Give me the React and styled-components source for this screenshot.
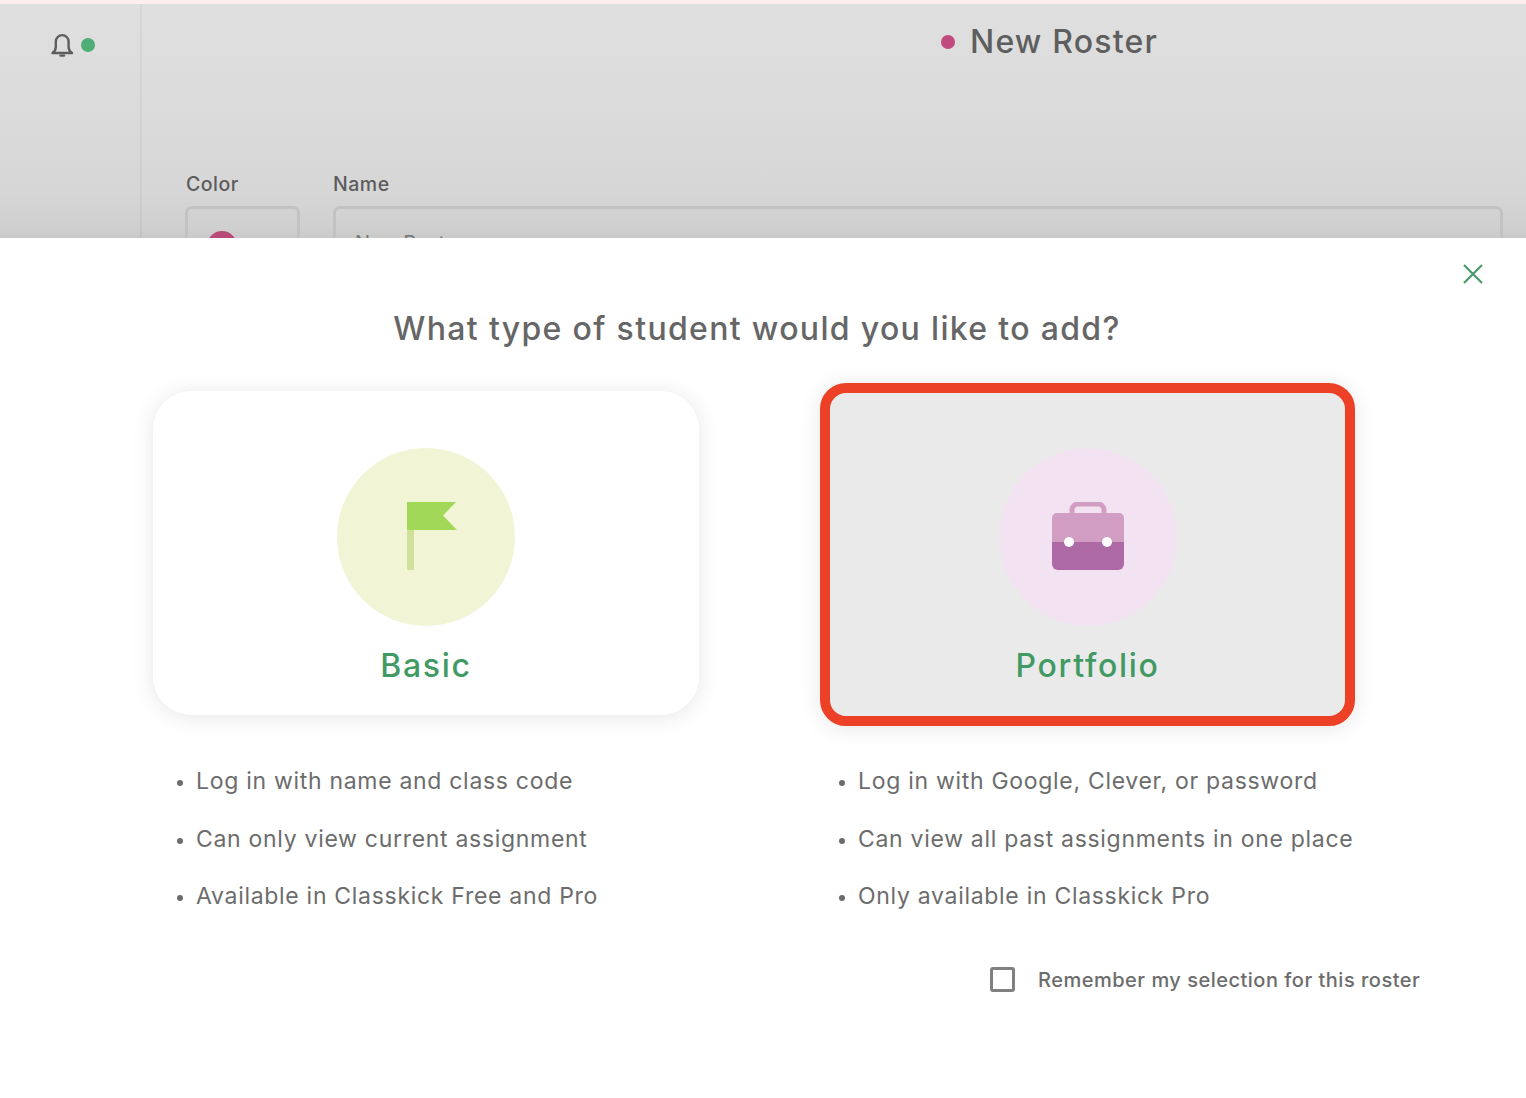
import React from 'react'
import styled, { createGlobalStyle } from 'styled-components'

const GlobalStyle = createGlobalStyle`
  html, body { margin: 0; padding: 0; background: #fff; }
  body { font-family: Inter, "Open Sans", sans-serif; color: #666; }
  * { box-sizing: border-box; }
`

const Page = styled.div`
  position: relative;
  width: 100%;
  height: 1098px;
  overflow: hidden;
`

const Backdrop = styled.div`
  display: flex;
  height: 238px;
  overflow: hidden;
  border-top: 4px solid #ffeeee;
  background: linear-gradient(#dfdfdf 0, #dcdcdc 90px, #d6d6d6 190px, #cfcfcf 225px, #c6c6c6 238px);
`

const Sidebar = styled.div`
  flex: 0 0 142px;
  border-right: 2px solid rgba(0, 0, 0, 0.04);
  display: flex;
  align-items: flex-start;
  gap: 7px;
  padding: 29px 0 0 50px;
`

const StatusDot = styled.span`
  width: 14px;
  height: 14px;
  margin-top: 5px;
  border-radius: 50%;
  background: #4fae76;
`

const Main = styled.div`
  flex: 1;
  padding-right: 23px;
`

const RosterTitle = styled.div`
  display: flex;
  align-items: center;
  gap: 15px;
  height: 74px;
  padding-left: 799px;
  font-size: 32px;
  font-weight: 500;
  color: #5e5e5e;
  letter-spacing: 1.2px;
`

const TitleDot = styled.span`
  width: 14px;
  height: 14px;
  margin-top: 1px;
  border-radius: 50%;
  background: #c0497d;
`

const FormRow = styled.div`
  display: flex;
  gap: 33px;
  padding: 94px 0 0 43px;
`

const Field = styled.div`
  flex: ${(p) => (p.$grow ? 1 : '0 0 115px')};
`

const FieldLabel = styled.div`
  font-size: 19.500px;
  font-weight: 500;
  color: #5c5c5c;
  height: 34px;
  line-height: 24px;
  padding-left: ${(p) => (p.$inset ? '1px' : '0')};
  letter-spacing: 0.5px;
`

const FieldBox = styled.div`
  height: 70px;
  border: 3px solid #c2c2c2;
  border-radius: 7px;
  padding: 22px 19px;
  font-size: 20px;
  color: #777;
`

const Swatch = styled.div`
  width: 30px;
  height: 30px;
  border-radius: 50%;
  background: #b94a78;
`

const Sheet = styled.div`
  position: absolute;
  left: 0;
  right: 0;
  top: 238px;
  bottom: 0;
  background: #fff;
  border-top-right-radius: 10px;
  padding-top: 70px;
`

const CloseButton = styled.button`
  position: absolute;
  top: 25px;
  right: 42px;
  width: 22px;
  height: 22px;
  padding: 0;
  border: 0;
  background: none;
  color: #4a9a6c;
`

const Heading = styled.h1`
  margin: 0;
  text-align: center;
  padding-right: 12px;
  font-size: 32px;
  line-height: 42px;
  font-weight: 500;
  letter-spacing: 1.33px;
  color: #666;
`

const Columns = styled.div`
  display: grid;
  grid-template-columns: 546px 546px;
  column-gap: 116px;
  padding: 41px 0 0 153px;
`

const Column = styled.div`
  display: flex;
  flex-direction: column;
`

const CardSlot = styled.div`
  height: 324px;
  display: flex;
  justify-content: center;
  align-items: center;
`

const Card = styled.div`
  flex: none;
  display: flex;
  flex-direction: column;
  align-items: center;
  width: ${(p) => (p.$selected ? '535px' : '100%')};
  height: ${(p) => (p.$selected ? '343px' : '100%')};
  margin-top: ${(p) => (p.$selected ? '3px' : '0')};
  margin-left: ${(p) => (p.$selected ? '-1px' : '0')};
  padding-top: ${(p) => (p.$selected ? '55px' : '57px')};
  background: ${(p) => (p.$selected ? '#eaeaea' : '#fff')};
  border: ${(p) => (p.$selected ? '10px solid #ec4126' : '0')};
  border-radius: ${(p) => (p.$selected ? '26px' : '38px')};
  box-shadow: 0 2px 22px rgba(0, 0, 0, 0.1);
`

const IconCircle = styled.div`
  width: 178px;
  height: 178px;
  border-radius: 50%;
  background: ${(p) => p.$bg};
  display: flex;
  align-items: center;
  justify-content: center;
`

const CardLabel = styled.div`
  margin-top: 20px;
  font-size: 32px;
  line-height: 40px;
  font-weight: 500;
  letter-spacing: 1.7px;
  color: #419a63;
`

const FeatureList = styled.ul`
  list-style: none;
  margin: 0;
  padding: 49px 0 0 24px;
  display: flex;
  flex-direction: column;
  gap: 23.5px;
`

const Feature = styled.li`
  position: relative;
  padding-left: 19px;
  font-size: 23px;
  line-height: 34px;
  letter-spacing: 0.7px;
  color: #6c6c6c;

  &::before {
    content: '';
    position: absolute;
    left: 0;
    top: 16px;
    width: 6px;
    height: 6px;
    border-radius: 50%;
    background: #6c6c6c;
  }
`

const RememberRow = styled.label`
  display: flex;
  align-items: center;
  gap: 23px;
  margin: 54px 0 0 990px;
`

const CheckBox = styled.span`
  width: 25px;
  height: 25px;
  border: 3px solid #808080;
  border-radius: 3px;
`

const RememberText = styled.span`
  font-size: 20px;
  font-weight: 500;
  letter-spacing: 0.5px;
  color: #6c6c6c;
`

const BellIcon = () => (
  <svg width="24" height="24" viewBox="0 0 24 24" fill="none" stroke="#5e5e5e" strokeWidth="2.4" strokeLinejoin="round" strokeLinecap="round">
    <path d="M2.500 20h19.500c-2.400-1.600-3.400-3-3.400-6V8.500a6.400 6.400 0 0 0-12.800 0V14c0 3-1 4.400-3.300 6z" />
    <path d="M10.500 22.600h3.500" />
  </svg>
)

const FlagIcon = () => (
  <svg width="62" height="70" viewBox="-12 1 62 70">
    <rect x="0" y="29" width="7" height="40" fill="#cfe19a" />
    <path d="M0 0h50L36 14.500 50 29H0z" fill="#a2d858" />
  </svg>
)

const BriefcaseIcon = () => (
  <svg width="72" height="70" viewBox="0 1 72 70">
    <path d="M20 13V9a6 6 0 0 1 6-6h20a6 6 0 0 1 6 6v4" fill="none" stroke="#d29dc3" strokeWidth="5" />
    <path d="M5 12h62a5 5 0 0 1 5 5v25H0V17a5 5 0 0 1 5-5z" fill="#d29dc3" />
    <path d="M0 41h72v22a6 6 0 0 1-6 6H6a6 6 0 0 1-6-6z" fill="#ac69a6" />
    <circle cx="17" cy="41" r="5" fill="#fff" />
    <circle cx="55" cy="41" r="5" fill="#fff" />
  </svg>
)

const options = [
  {
    name: 'Basic',
    bg: '#f1f5d6',
    icon: <FlagIcon />,
    features: ['Log in with name and class code', 'Can only view current assignment', 'Available in Classkick Free and Pro'],
  },
  {
    name: 'Portfolio',
    bg: '#f3e2f1',
    selected: true,
    icon: <BriefcaseIcon />,
    features: ['Log in with Google, Clever, or password', 'Can view all past assignments in one place', 'Only available in Classkick Pro'],
  },
]

export default function App() {
  return (
    <Page>
      <GlobalStyle />
      <Backdrop>
        <Sidebar>
          <BellIcon />
          <StatusDot />
        </Sidebar>
        <Main>
          <RosterTitle>
            <TitleDot />
            New Roster
          </RosterTitle>
          <FormRow>
            <Field>
              <FieldLabel $inset>Color</FieldLabel>
              <FieldBox>
                <Swatch />
              </FieldBox>
            </Field>
            <Field $grow>
              <FieldLabel>Name</FieldLabel>
              <FieldBox>New Roster</FieldBox>
            </Field>
          </FormRow>
        </Main>
      </Backdrop>
      <Sheet>
        <CloseButton aria-label="Close">
          <svg width="22" height="22" viewBox="0 0 22 22" stroke="currentColor" strokeWidth="2.200" fill="none">
            <path d="M2 2l18 18M20 2L2 20" />
          </svg>
        </CloseButton>
        <Heading>What type of student would you like to add?</Heading>
        <Columns>
          {options.map((o) => (
            <Column key={o.name}>
              <CardSlot>
                <Card $selected={o.selected}>
                  <IconCircle $bg={o.bg}>{o.icon}</IconCircle>
                  <CardLabel>{o.name}</CardLabel>
                </Card>
              </CardSlot>
              <FeatureList>
                {o.features.map((f) => (
                  <Feature key={f}>{f}</Feature>
                ))}
              </FeatureList>
            </Column>
          ))}
        </Columns>
        <RememberRow>
          <CheckBox />
          <RememberText>Remember my selection for this roster</RememberText>
        </RememberRow>
      </Sheet>
    </Page>
  )
}
